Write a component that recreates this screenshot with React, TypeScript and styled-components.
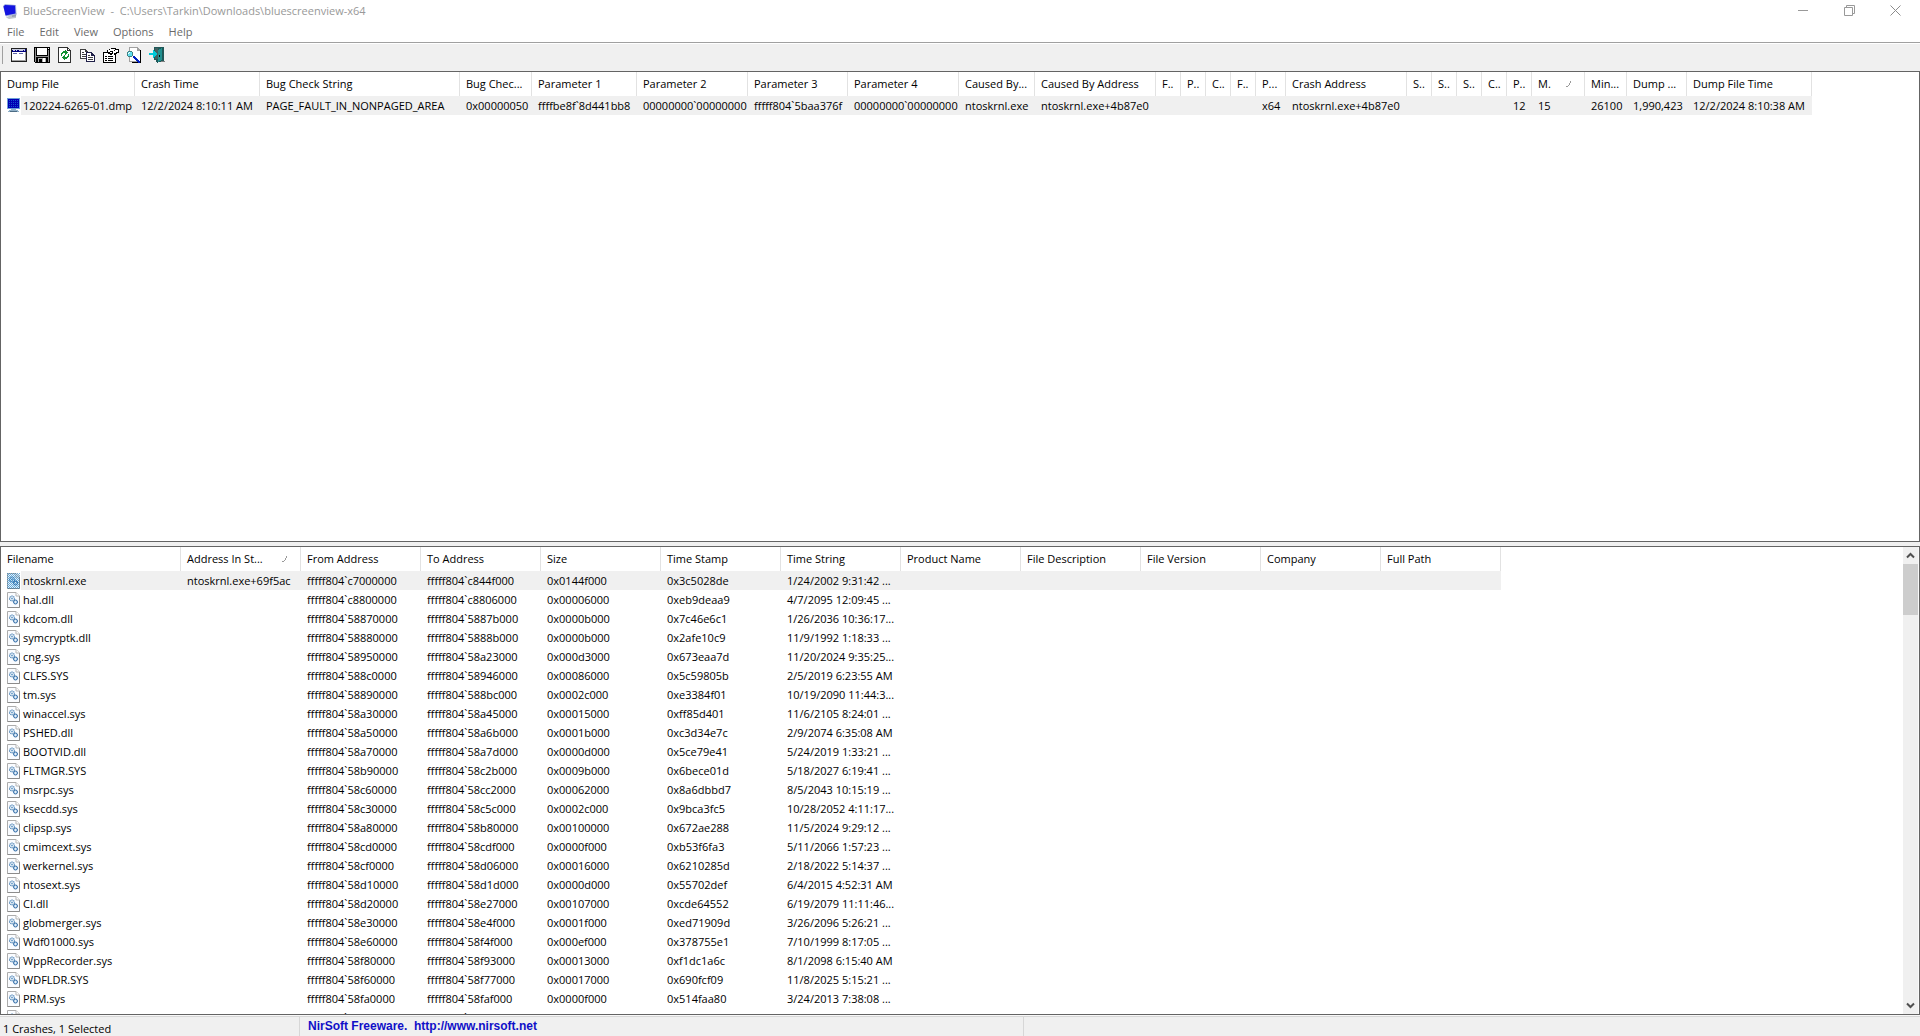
import React from 'react';
import styled, { createGlobalStyle } from 'styled-components';

const GlobalStyle = createGlobalStyle`
  *, *::before, *::after { box-sizing: border-box; }
  body {
    margin: 0;
    background: #f0f0f0;
    color: #000;
    font-family: "Open Sans", "Noto Sans", sans-serif;
    font-size: 11px;
    line-height: 16px;
  }
  button {
    border: 0;
    padding: 0;
    background: none;
    color: inherit;
    font: inherit;
  }
  svg { display: block; flex: none; }
`;

const Window = styled.div`
  display: flex;
  flex-direction: column;
  height: 100vh;
  overflow: hidden;
`;

const TitleBar = styled.header`
  display: flex;
  align-items: center;
  flex: none;
  height: 22px;
  padding: 0 2px 1px 3px;
  background: #fff;
  color: #999;
`;

const Title = styled.h1`
  flex: 1;
  margin: 0;
  padding-left: 6px;
  font-size: 11px;
  font-weight: 400;
  white-space: pre;
`;

const WindowButton = styled.button`
  display: flex;
  align-items: center;
  justify-content: center;
  width: 46px;
  height: 18px;
  padding-bottom: 1px;
`;

const MenuBar = styled.nav`
  display: flex;
  align-items: center;
  flex: none;
  height: 20px;
  background: #fff;
  color: #6a6a6a;
`;

const MenuButton = styled.button`
  padding: 0 8px 0 7px;
`;

const Toolbar = styled.div`
  display: flex;
  align-items: center;
  flex: none;
  height: 29px;
  padding: 0 2px 4px;
  border-top: 1px solid #a0a0a0;
  box-shadow: inset 0 1px #fff;
`;

const Grip = styled.span`
  width: 1px;
  height: 18px;
  margin-right: 4px;
  background: #a0a0a0;
`;

const ToolButton = styled.button`
  display: flex;
  align-items: center;
  justify-content: center;
  width: 23px;
  height: 22px;
`;

const Panes = styled.main`
  display: grid;
  flex: 1;
  grid-template-rows: 471fr 469fr;
  gap: 4px;
  min-height: 0;
`;

const Pane = styled.section`
  display: flex;
  min-width: 0;
  min-height: 0;
  border: 1px solid #646464;
  background: #fff;
`;

const PaneBody = styled.div`
  flex: 1;
  min-width: 0;
  overflow: hidden;
`;

const Table = styled.table`
  width: 0;
  border-collapse: separate;
  border-spacing: 0;
  table-layout: fixed;
`;

const Col = styled.col<{ $width: number }>`
  width: ${(p) => p.$width}px;
`;

const HeadCell = styled.th`
  height: 24px;
  padding: 0 0 0 6px;
  border-right: 1px solid #e2e2e2;
  font-weight: 400;
  text-align: left;
  white-space: nowrap;
`;

const SortedLabel = styled.div`
  display: flex;
  align-items: center;
  justify-content: space-between;
  padding-right: 13px;
`;

const Row = styled.tr<{ $selected?: boolean }>`
  td, td > div > span { background: ${(p) => (p.$selected ? '#f0f0f0' : 'transparent')}; }
  td:first-child { background: transparent; }
`;

const Cell = styled.td`
  height: 19px;
  padding: 0 0 0 6px;
  line-height: 19px;
  white-space: nowrap;
`;

const FileCell = styled.div`
  display: flex;
  align-items: center;
  height: 19px;
`;

const FileName = styled.span`
  flex: 1;
  height: 19px;
  margin-left: 1px;
  padding-left: 2px;
`;

const ScrollBar = styled.div`
  display: flex;
  flex-direction: column;
  flex: none;
  width: 16px;
  border-right: 1px solid #fafafa;
  background: #f0f0f0;
`;

const ScrollButton = styled.button`
  display: flex;
  align-items: center;
  justify-content: center;
  flex: none;
  height: 17px;
`;

const ScrollTrack = styled.div`
  flex: 1;
`;

const ScrollThumb = styled.div`
  height: 51px;
  background: #cdcdcd;
`;

const StatusBar = styled.footer`
  display: grid;
  grid-template-columns: 299px 724px 1fr;
  flex: none;
  height: 21px;
  padding-top: 2px;
  box-shadow: inset 0 1px #f8f8f8, inset 0 2px #d7d7d7;
`;

const StatusPart = styled.div`
  padding: 4px 0 0 3px;
  line-height: 15px;
  white-space: pre;
  & + & { padding: 2px 0 0 8px; border-left: 1px solid #d7d7d7; }
`;

const StatusLink = styled.a`
  display: block;
  color: #0f0fc8;
  font: bold 12px/15px "Liberation Sans", Arial, sans-serif;
  text-decoration: none;
`;

function AppIcon() {
  return (
    <svg width="14" height="16" viewBox="0 0 14 16" aria-hidden="true">
      <path d="M3 14.5 L8 12 L13 13 L13 15 L6 16Z" fill="#c0c6cc" />
      <path d="M9 12 L13.5 10 L13 13.5 L9 14Z" fill="#98a0b0" />
      <path d="M0 3 L2 1 L13 2 L13.5 11.5 L3 13.5Z" fill="#a8b4dc" />
      <path d="M0.5 3.5 L2 2 L12 2.5 L12.5 10.5 L2.5 12.5Z" fill="#1414e0" />
    </svg>
  );
}

function DumpIcon() {
  return (
    <svg width="13" height="15" viewBox="0 0 13 15" shapeRendering="crispEdges" aria-hidden="true">
      <path d="M0 0h13v11H0z" fill="#6c9fd8" />
      <path d="M1 1h11v9H1z" fill="#0000b4" />
      <path d="M2 2h1v1H2zM4 2h1v1H4zM6 2h1v1H6zM8 2h1v1H8zM10 2h1v1h-1zM2 4h1v1H2zM4 4h1v1H4zM6 4h1v1H6zM8 4h1v1H8zM10 4h1v1h-1zM2 6h1v1H2zM4 6h1v1H4zM6 6h1v1H6zM8 6h1v1H8zM10 6h1v1h-1zM2 8h1v1H2zM4 8h1v1H4zM6 8h1v1H6zM8 8h1v1H8zM10 8h1v1h-1z" fill="#1450d0" />
      <path d="M4 11h5v1H4zM2 12h9v1H2zM1 13h11v1H1z" fill="#8fb0c8" />
      <path d="M3 13h7v1H3z" fill="#4c6c84" />
    </svg>
  );
}

function DllIcon({ selected }: { selected?: boolean }) {
  const dots: string[] = [];
  if (selected) {
    for (let y = 0; y < 16; y++) for (let x = y % 2; x < 13; x += 2) dots.push(`M${x} ${y}h1v1h-1z`);
  }
  return (
    <svg width="13" height="16" viewBox="0 0 13 16" aria-hidden="true">
      <path d="M0.5 0.5H9L12.5 4V15.5H0.5Z" fill={selected ? '#e4f2fc' : '#fafcff'} stroke="#acacac" />
      <path d="M0.5 15.5H12.5V4" fill="none" stroke="#8c8c8c" />
      <path d="M9 0.5V4H12.5" fill="#fff" stroke="#b4b4b4" />
      <circle cx="5" cy="6.5" r="2.4" fill="none" stroke="#4880b4" strokeWidth="1.2" strokeDasharray="1.3 0.6" />
      <circle cx="5" cy="6.5" r="0.9" fill="#5c94c4" />
      <circle cx="8.5" cy="10" r="2" fill="#b8d4ec" stroke="#3870a8" strokeWidth="1" />
      <circle cx="8.5" cy="10" r="0.7" fill="#fff" />
      {selected && <path d={dots.join('')} fill="#1478c0" fillOpacity="0.6" shapeRendering="crispEdges" />}
    </svg>
  );
}

function SortGlyph() {
  return (
    <svg width="5" height="7" viewBox="0 0 5 7" shapeRendering="crispEdges" aria-hidden="true">
      <path d="M4 0h1v2H4zM3 2h1v2H3zM2 4h1v1H2zM0 5h2v1H0z" fill="#9a9a9a" />
    </svg>
  );
}

const toolIcons: { name: string; art: React.ReactNode }[] = [
  {
    name: 'Advanced Options',
    art: (
      <>
        <path d="M0 1h16v14H0z" fill="#202020" />
        <path d="M1 2h14v3H1z" fill="#000080" />
        <path d="M1 2h13v1H1zM2 3h2v1H2zM5 3h1v1H5zM8 3h4v1H8zM13 3h1v1h-1z" fill="#c8cce0" />
        <path d="M1 5h13v9H1z" fill="#fff" />
        <path d="M2 6h4v1H2zM8 6h4v1H8z" fill="#6068a8" />
        <path d="M14 5h1v9h-1zM1 13h14v1H1z" fill="#a0a0a0" />
      </>
    ),
  },
  {
    name: 'Save',
    art: (
      <>
        <path d="M0 0h16v16H1L0 15z" fill="#000" />
        <path d="M1 1h1v14H1zM14 3h1v12h-1z" fill="#909090" />
        <path d="M3 1h10v7H3z" fill="#fff" />
        <path d="M14 1h1v1h-1z" fill="#fff" />
        <path d="M2 9h12v1H2z" fill="#909090" />
        <path d="M4 11h8v4H4z" fill="#b0b0b0" />
        <path d="M9 11h2v4H9z" fill="#fff" />
        <path d="M5 12h3v3H5z" fill="#000" />
      </>
    ),
  },
  {
    name: 'Refresh',
    art: (
      <>
        <path d="M1 0h10v1h1v1h1v1h1v13H1z" fill="#303030" />
        <path d="M2 1h8v3h3v11H2z" fill="#fff" />
        <path d="M11 2h1v1h-1z" fill="#fff" />
        <path d="M8 3h1v1h1v1h1v1h-1v1H9v1H8V6H6v1H5v2H4V6h1V5h1V4h2zM11 7h1v3h-1v1h-1v1H8v1H7v-1H6v-1H5v-1h1V9h1V8h1v2h2V9h1z" fill="#109030" />
      </>
    ),
  },
  {
    name: 'Copy Selected Items',
    art: (
      <>
        <path d="M0 2h6v1h1v1h1v8H0z" fill="#404040" />
        <path d="M1 3h4v2h2v6H1z" fill="#fff" />
        <path d="M2 5h2v1H2zM2 7h4v1H2zM2 9h4v1H2z" fill="#404040" />
        <path d="M6 5h6v1h1v1h1v1h1v7H6z" fill="#202048" />
        <path d="M7 6h4v3h3v5H7z" fill="#fff" />
        <path d="M8 8h2v1H8zM8 10h5v1H8zM8 12h5v1H8z" fill="#404040" />
      </>
    ),
  },
  {
    name: 'Properties',
    art: (
      <>
        <path d="M0 5h13v11H0z" fill="#000" />
        <path d="M1 6h11v9H1z" fill="#fff" />
        <path d="M2 9h2v1H2zM5 9h5v1H5zM2 11h2v1H2zM5 11h5v1H5zM2 13h2v1H2zM5 13h5v1H5z" fill="#000" />
        <path d="M4 3h2V2h2V1h5v1h3v4h-2v1h-2v1h-1V7H9v1H7V7H5V6H4z" fill="#000" />
        <path d="M5 3h2V2h5v1h3v2h-2v1h-2v1h-1V5H9v1H7V5H5z" fill="#fff" />
        <path d="M7 4h3v1H7zM11 3h1v1h-1z" fill="#000" />
      </>
    ),
  },
  {
    name: 'Find',
    art: (
      <>
        <path d="M3 0h9v1h1v1h1v1h1v12H3z" fill="#a0a0a0" />
        <path d="M4 1h7v3h3v10H4z" fill="#fff" />
        <path d="M14 3h1v13H6v-1h8z" fill="#000" />
        <path d="M2 4h4v1h1v4H6v1H2V9H1V5h1z" fill="#408080" />
        <path d="M2 5h4v4H2z" fill="#60e0f0" />
        <path d="M3 5h1v1H3zM2 6h1v1H2z" fill="#fff" />
        <path d="M7 9h2v1h1v1h1v1h1v1h1v1h1v2h-2v-1h-1v-1h-1v-1H9v-1H8v-1H7z" fill="#0020c0" />
      </>
    ),
  },
  {
    name: 'Exit',
    art: (
      <>
        <path d="M5 0h10v14h-1v1H9v1H8v-1H7v-2H5z" fill="#205858" />
        <path d="M6 1h3v11H6z" fill="#406060" />
        <path d="M9 3l4-2v12l-4 2z" fill="#209090" />
        <path d="M10 8h1v2h-1z" fill="#000" />
        <path d="M0 6h4V3h1v1h1v1h1v1h1v2H7v1H6v1H5v1H4V8H0z" fill="#00c8d8" />
        <path d="M12 14h4v1h-4z" fill="#808080" />
      </>
    ),
  },
];

type Column = [label: string, width: number, sorted?: boolean];

const crashColumns: Column[] = [
  ['Dump File', 134],
  ['Crash Time', 125],
  ['Bug Check String', 200],
  ['Bug Chec...', 72],
  ['Parameter 1', 105],
  ['Parameter 2', 111],
  ['Parameter 3', 100],
  ['Parameter 4', 111],
  ['Caused By...', 76],
  ['Caused By Address', 121],
  ['F..', 25],
  ['P..', 25],
  ['C..', 25],
  ['F..', 25],
  ['P...', 30],
  ['Crash Address', 121],
  ['S..', 25],
  ['S..', 25],
  ['S..', 25],
  ['C..', 25],
  ['P..', 25],
  ['M.', 53, true],
  ['Min...', 42],
  ['Dump ...', 60],
  ['Dump File Time', 125],
];

const crashRow = [
  '120224-6265-01.dmp', '12/2/2024 8:10:11 AM', 'PAGE_FAULT_IN_NONPAGED_AREA', '0x00000050',
  'ffffbe8f`8d441bb8', '00000000`00000000', 'fffff804`5baa376f', '00000000`00000000',
  'ntoskrnl.exe', 'ntoskrnl.exe+4b87e0', '', '', '', '', 'x64', 'ntoskrnl.exe+4b87e0',
  '', '', '', '', '12', '15', '26100', '1,990,423', '12/2/2024 8:10:38 AM',
];

const driverColumns: Column[] = [
  ['Filename', 180],
  ['Address In St...', 120, true],
  ['From Address', 120],
  ['To Address', 120],
  ['Size', 120],
  ['Time Stamp', 120],
  ['Time String', 120],
  ['Product Name', 120],
  ['File Description', 120],
  ['File Version', 120],
  ['Company', 120],
  ['Full Path', 120],
];

// name, from, to, size, time stamp, time string
const drivers: string[][] = [
  ['ntoskrnl.exe', 'c7000000', 'c844f000', '0144f000', '3c5028de', '1/24/2002 9:31:42 ...'],
  ['hal.dll', 'c8800000', 'c8806000', '00006000', 'eb9deaa9', '4/7/2095 12:09:45 ...'],
  ['kdcom.dll', '58870000', '5887b000', '0000b000', '7c46e6c1', '1/26/2036 10:36:17...'],
  ['symcryptk.dll', '58880000', '5888b000', '0000b000', '2afe10c9', '11/9/1992 1:18:33 ...'],
  ['cng.sys', '58950000', '58a23000', '000d3000', '673eaa7d', '11/20/2024 9:35:25...'],
  ['CLFS.SYS', '588c0000', '58946000', '00086000', '5c59805b', '2/5/2019 6:23:55 AM'],
  ['tm.sys', '58890000', '588bc000', '0002c000', 'e3384f01', '10/19/2090 11:44:3...'],
  ['winaccel.sys', '58a30000', '58a45000', '00015000', 'ff85d401', '11/6/2105 8:24:01 ...'],
  ['PSHED.dll', '58a50000', '58a6b000', '0001b000', 'c3d34e7c', '2/9/2074 6:35:08 AM'],
  ['BOOTVID.dll', '58a70000', '58a7d000', '0000d000', '5ce79e41', '5/24/2019 1:33:21 ...'],
  ['FLTMGR.SYS', '58b90000', '58c2b000', '0009b000', '6bece01d', '5/18/2027 6:19:41 ...'],
  ['msrpc.sys', '58c60000', '58cc2000', '00062000', '8a6dbbd7', '8/5/2043 10:15:19 ...'],
  ['ksecdd.sys', '58c30000', '58c5c000', '0002c000', '9bca3fc5', '10/28/2052 4:11:17...'],
  ['clipsp.sys', '58a80000', '58b80000', '00100000', '672ae288', '11/5/2024 9:29:12 ...'],
  ['cmimcext.sys', '58cd0000', '58cdf000', '0000f000', 'b53f6fa3', '5/11/2066 1:57:23 ...'],
  ['werkernel.sys', '58cf0000', '58d06000', '00016000', '6210285d', '2/18/2022 5:14:37 ...'],
  ['ntosext.sys', '58d10000', '58d1d000', '0000d000', '55702def', '6/4/2015 4:52:31 AM'],
  ['CI.dll', '58d20000', '58e27000', '00107000', 'cde64552', '6/19/2079 11:11:46...'],
  ['globmerger.sys', '58e30000', '58e4f000', '0001f000', 'ed71909d', '3/26/2096 5:26:21 ...'],
  ['Wdf01000.sys', '58e60000', '58f4f000', '000ef000', '378755e1', '7/10/1999 8:17:05 ...'],
  ['WppRecorder.sys', '58f80000', '58f93000', '00013000', 'f1dc1a6c', '8/1/2098 6:15:40 AM'],
  ['WDFLDR.SYS', '58f60000', '58f77000', '00017000', '690fcf09', '11/8/2025 5:15:21 ...'],
  ['PRM.sys', '58fa0000', '58faf000', '0000f000', '514faa80', '3/24/2013 7:38:08 ...'],
  ['acpiex.sys', '58fc0000', '58fe6000', '00026000', '94831f0b', ''],
];

function TableHead({ columns }: { columns: Column[] }) {
  return (
    <>
      <colgroup>
        {columns.map(([, width], i) => <Col key={i} $width={width} />)}
      </colgroup>
      <thead>
        <tr>
          {columns.map(([label, , sorted], i) => (
            <HeadCell key={i} scope="col" aria-sort={sorted ? 'ascending' : undefined}>
              {sorted ? <SortedLabel>{label}<SortGlyph /></SortedLabel> : label}
            </HeadCell>
          ))}
        </tr>
      </thead>
    </>
  );
}

function DataRow({ cells, icon, selected }: { cells: string[]; icon: React.ReactNode; selected?: boolean }) {
  return (
    <Row $selected={selected} aria-selected={selected}>
      {cells.map((text, i) => (
        <Cell key={i}>
          {i === 0 ? <FileCell>{icon}<FileName>{text}</FileName></FileCell> : text}
        </Cell>
      ))}
    </Row>
  );
}

export default function App() {
  return (
    <>
      <GlobalStyle />
      <Window>
        <TitleBar>
          <AppIcon />
          <Title>{'BlueScreenView  -  C:\\Users\\Tarkin\\Downloads\\bluescreenview-x64'}</Title>
          <WindowButton aria-label="Minimize">
            <svg width="11" height="11" viewBox="0 0 11 11" shapeRendering="crispEdges"><path d="M0 5h10v1H0z" fill="#999" /></svg>
          </WindowButton>
          <WindowButton aria-label="Restore">
            <svg width="11" height="11" viewBox="0 0 11 11" fill="none" stroke="#999"><path d="M0.5 2.5h8v8h-8zM2.5 2.5v-2h8v8h-2" /></svg>
          </WindowButton>
          <WindowButton aria-label="Close">
            <svg width="11" height="11" viewBox="0 0 11 11" fill="none" stroke="#8c8c8c"><path d="M0.5 0.5l10 10M10.5 0.5l-10 10" /></svg>
          </WindowButton>
        </TitleBar>
        <MenuBar>
          {['File', 'Edit', 'View', 'Options', 'Help'].map((m) => <MenuButton key={m}>{m}</MenuButton>)}
        </MenuBar>
        <Toolbar role="toolbar">
          <Grip />
          {toolIcons.map(({ name, art }) => (
            <ToolButton key={name} aria-label={name}>
              <svg width="16" height="16" viewBox="0 0 16 16" shapeRendering="crispEdges">{art}</svg>
            </ToolButton>
          ))}
        </Toolbar>
        <Panes>
          <Pane>
            <PaneBody>
              <Table>
                <TableHead columns={crashColumns} />
                <tbody>
                  <DataRow cells={crashRow} icon={<DumpIcon />} selected />
                </tbody>
              </Table>
            </PaneBody>
          </Pane>
          <Pane>
            <PaneBody>
              <Table>
                <TableHead columns={driverColumns} />
                <tbody>
                  {drivers.map(([name, from, to, size, stamp, time], i) => (
                    <DataRow
                      key={name}
                      selected={i === 0}
                      icon={<DllIcon selected={i === 0} />}
                      cells={[
                        name,
                        i === 0 ? 'ntoskrnl.exe+69f5ac' : '',
                        'fffff804`' + from,
                        'fffff804`' + to,
                        '0x' + size,
                        '0x' + stamp,
                        time,
                        '', '', '', '', '',
                      ]}
                    />
                  ))}
                </tbody>
              </Table>
            </PaneBody>
            <ScrollBar>
              <ScrollButton aria-label="Scroll up">
                <svg width="9" height="7" viewBox="0 0 9 7" fill="none" stroke="#505050" strokeWidth="2"><path d="M1 5.5l3.5-3.5L8 5.5" /></svg>
              </ScrollButton>
              <ScrollTrack><ScrollThumb /></ScrollTrack>
              <ScrollButton aria-label="Scroll down">
                <svg width="9" height="7" viewBox="0 0 9 7" fill="none" stroke="#505050" strokeWidth="2"><path d="M1 1.5L4.5 5 8 1.5" /></svg>
              </ScrollButton>
            </ScrollBar>
          </Pane>
        </Panes>
        <StatusBar>
          <StatusPart>1 Crashes, 1 Selected</StatusPart>
          <StatusPart>
            <StatusLink href="http://www.nirsoft.net">{'NirSoft Freeware.  http://www.nirsoft.net'}</StatusLink>
          </StatusPart>
          <StatusPart />
        </StatusBar>
      </Window>
    </>
  );
}
